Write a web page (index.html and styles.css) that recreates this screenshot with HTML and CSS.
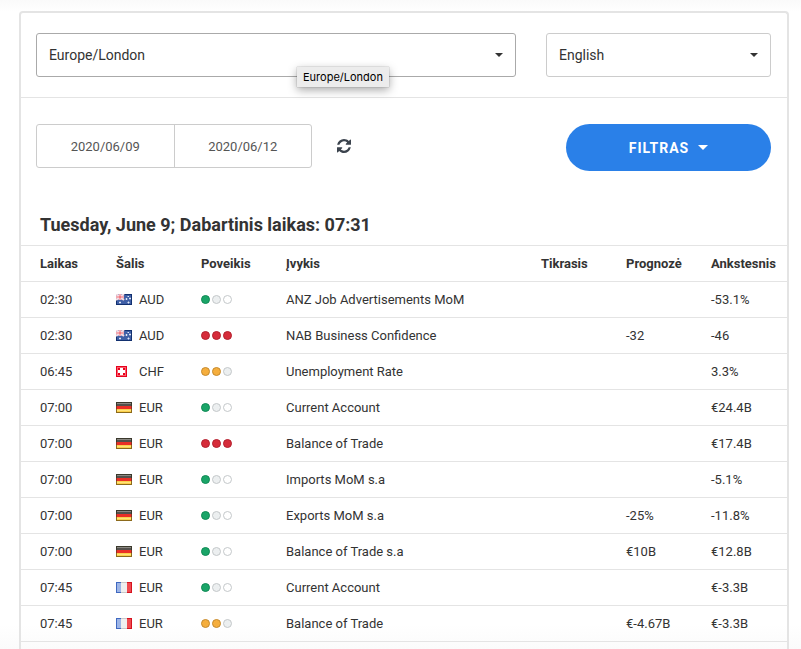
FILE: index.html
```html
<!DOCTYPE html>
<html lang="lt">
<head>
  <meta charset="utf-8">
  <meta name="viewport" content="width=device-width, initial-scale=1">
  <title>Ekonominis kalendorius</title>
  <link rel="stylesheet" href="styles.css">
</head>
<body>
  <svg class="sprite" aria-hidden="true">
    <symbol id="flag-au" viewBox="0 0 16 11">
      <rect width="16" height="11" fill="#12306f"/>
      <rect x="1" y="1" width="14" height="9" fill="#3f5fa6"/>
      <rect width="8" height="6" fill="#8f9ccb"/>
      <path d="M0 0l8 6M8 0L0 6" stroke="#f6dbe0" stroke-width="2"/>
      <path d="M4 0v6M0 3h8" stroke="#fff" stroke-width="2"/>
      <path d="M4 0v6M0 3h8" stroke="#e8505f" stroke-width="1"/>
      <path d="M3 8.500h2M4 7.500v2M9.500 5h2M10.500 4v2M13 4.500h2M14 3.500v2M11.500 2.500h1.500M11.500 8.500h2M12.500 7.500v2" stroke="#dfe6f6" stroke-width="1"/>
    </symbol>
    <symbol id="flag-ch" viewBox="0 0 11 11">
      <rect width="11" height="11" fill="#e8001c"/>
      <rect x="1.500" y="1.500" width="8" height="8" fill="none" stroke="#f9626f"/>
      <path d="M4 2h3v2h2v3H7v2H4V7H2V4h2z" fill="#fff"/>
    </symbol>
    <symbol id="flag-de" viewBox="0 0 16 11">
      <rect width="16" height="4" fill="#3a382c"/>
      <rect y="4" width="16" height="3" fill="#8f3020"/>
      <rect y="7" width="16" height="4" fill="#8c6a1c"/>
      <rect x="1" y="1" width="14" height="1" fill="#8a8882"/>
      <rect x="1" y="2" width="14" height="2" fill="#54504c"/>
      <rect x="1" y="4" width="14" height="3" fill="#ea2f26"/>
      <rect x="1" y="7" width="14" height="3" fill="#fbd04a"/>
      <rect x="1" y="8" width="14" height="1" fill="#ffe27c"/>
    </symbol>
    <symbol id="flag-fr" viewBox="0 0 16 11">
      <rect width="6" height="11" fill="#3f68c0"/>
      <rect x="5" width="6" height="11" fill="#c9c9c9"/>
      <rect x="11" width="5" height="11" fill="#d5121f"/>
      <rect x="1" y="1" width="4" height="9" fill="#9db5e6"/>
      <rect x="5" y="1" width="6" height="9" fill="#efefef"/>
      <rect x="11" y="1" width="4" height="9" fill="#f04a50"/>
    </symbol>
  </svg>

  <main class="calendar">
    <div class="settings">
      <div class="select-box timezone">
        <select class="active" aria-label="Laiko juosta">
          <option>Europe/London</option>
        </select>
        <span class="tooltip">Europe/London</span>
      </div>
      <div class="select-box language">
        <select aria-label="Kalba">
          <option>English</option>
        </select>
      </div>
    </div>

    <div class="toolbar">
      <div class="dates">
        <input type="text" value="2020/06/09" aria-label="Nuo">
        <input type="text" value="2020/06/12" aria-label="Iki">
      </div>
      <button type="button" class="refresh" aria-label="Atnaujinti">
        <svg viewBox="0 0 1536 1536" width="14" height="14"><path d="M1511 928q0 5-1 7-64 268-268 434.500t-478 166.500q-146 0-282.500-55t-243.500-157l-129 129q-19 19-45 19t-45-19-19-45v-448q0-26 19-45t45-19h448q26 0 45 19t19 45-19 45l-137 137q71 66 161 102t187 36q134 0 250-65t186-179q11-17 53-117 8-23 30-23h192q13 0 22.500 9.500t9.500 22.500zm25-800v448q0 26-19 45t-45 19h-448q-26 0-45-19t-19-45 19-45l138-138q-148-137-349-137-134 0-250 65t-186 179q-11 17-53 117-8 23-30 23h-199q-13 0-22.500-9.500t-9.500-22.500v-7q65-268 270-434.500t480-166.500q146 0 284 55.500t245 156.500l130-129q19-19 45-19t45 19 19 45z"/></svg>
      </button>
      <button type="button" class="filter">Filtras</button>
    </div>

    <h2>Tuesday, June 9; Dabartinis laikas: 07:31</h2>

    <table>
      <thead>
        <tr>
          <th class="col-time">Laikas</th>
          <th class="col-data">Šalis</th>
          <th class="col-data">Poveikis</th>
          <th>Įvykis</th>
          <th class="col-data">Tikrasis</th>
          <th class="col-data">Prognozė</th>
          <th class="col-last">Ankstesnis</th>
        </tr>
      </thead>
      <tbody>
        <tr>
          <td>02:30</td>
          <td><span class="country"><svg class="flag"><use href="#flag-au"/></svg>AUD</span></td>
          <td><span class="impact low"><i></i><i></i><i></i></span></td>
          <td>ANZ Job Advertisements MoM</td>
          <td></td>
          <td></td>
          <td>-53.1%</td>
        </tr>
        <tr>
          <td>02:30</td>
          <td><span class="country"><svg class="flag"><use href="#flag-au"/></svg>AUD</span></td>
          <td><span class="impact high"><i></i><i></i><i></i></span></td>
          <td>NAB Business Confidence</td>
          <td></td>
          <td>-32</td>
          <td>-46</td>
        </tr>
        <tr>
          <td>06:45</td>
          <td><span class="country"><svg class="flag"><use href="#flag-ch" width="11"/></svg>CHF</span></td>
          <td><span class="impact medium"><i></i><i></i><i></i></span></td>
          <td>Unemployment Rate</td>
          <td></td>
          <td></td>
          <td>3.3%</td>
        </tr>
        <tr>
          <td>07:00</td>
          <td><span class="country"><svg class="flag"><use href="#flag-de"/></svg>EUR</span></td>
          <td><span class="impact low"><i></i><i></i><i></i></span></td>
          <td>Current Account</td>
          <td></td>
          <td></td>
          <td>€24.4B</td>
        </tr>
        <tr>
          <td>07:00</td>
          <td><span class="country"><svg class="flag"><use href="#flag-de"/></svg>EUR</span></td>
          <td><span class="impact high"><i></i><i></i><i></i></span></td>
          <td>Balance of Trade</td>
          <td></td>
          <td></td>
          <td>€17.4B</td>
        </tr>
        <tr>
          <td>07:00</td>
          <td><span class="country"><svg class="flag"><use href="#flag-de"/></svg>EUR</span></td>
          <td><span class="impact low"><i></i><i></i><i></i></span></td>
          <td>Imports MoM s.a</td>
          <td></td>
          <td></td>
          <td>-5.1%</td>
        </tr>
        <tr>
          <td>07:00</td>
          <td><span class="country"><svg class="flag"><use href="#flag-de"/></svg>EUR</span></td>
          <td><span class="impact low"><i></i><i></i><i></i></span></td>
          <td>Exports MoM s.a</td>
          <td></td>
          <td>-25%</td>
          <td>-11.8%</td>
        </tr>
        <tr>
          <td>07:00</td>
          <td><span class="country"><svg class="flag"><use href="#flag-de"/></svg>EUR</span></td>
          <td><span class="impact low"><i></i><i></i><i></i></span></td>
          <td>Balance of Trade s.a</td>
          <td></td>
          <td>€10B</td>
          <td>€12.8B</td>
        </tr>
        <tr>
          <td>07:45</td>
          <td><span class="country"><svg class="flag"><use href="#flag-fr"/></svg>EUR</span></td>
          <td><span class="impact low"><i></i><i></i><i></i></span></td>
          <td>Current Account</td>
          <td></td>
          <td></td>
          <td>€-3.3B</td>
        </tr>
        <tr>
          <td>07:45</td>
          <td><span class="country"><svg class="flag"><use href="#flag-fr"/></svg>EUR</span></td>
          <td><span class="impact medium"><i></i><i></i><i></i></span></td>
          <td>Balance of Trade</td>
          <td></td>
          <td>€-4.67B</td>
          <td>€-3.3B</td>
        </tr>
      </tbody>
    </table>
  </main>
</body>
</html>
```
FILE: styles.css
```css
* {
  box-sizing: border-box;
}
body {
  display: flex;
  flex-direction: column;
  min-height: 100vh;
  margin: 0;
  padding: 11px 12px 0 19px;
  background: linear-gradient(#fafafa, #fff 12px, #fff calc(100% - 24px), #fbfbfb);
  color: #333;
  font-family: Roboto, sans-serif;
  font-size: 13px;
}
.sprite {
  display: none;
}
.calendar {
  flex: 1;
  border: 2px solid #e4e4e4;
  border-bottom: none;
  border-radius: 4px 4px 0 0;
}

/* timezone and language */
.settings {
  display: flex;
  gap: 30px;
  padding: 20px 16px 20px 15px;
  border-bottom: 1px solid #e4e4e4;
}
.select-box {
  position: relative;
}
.timezone {
  flex: 32;
}
.language {
  flex: 15;
}
select {
  appearance: none;
  display: block;
  width: 100%;
  height: 44px;
  padding: 0 12px;
  border: 1px solid #ccc;
  border-radius: 3px;
  background: #fff;
  color: #333;
  font-family: inherit;
  font-size: 14px;
}
select.active {
  border-color: #aaa;
}
.select-box::after {
  content: "";
  position: absolute;
  top: 20px;
  right: 13px;
  border: 4px solid transparent;
  border-top-color: #333;
  border-bottom: none;
}
.tooltip {
  position: absolute;
  z-index: 1;
  top: 34px;
  left: 261px;
  padding: 0 6px;
  background: #ececec;
  box-shadow: 0 0 1px rgba(0,0,0,0.4), 0 3px 10px rgba(0,0,0,0.35);
  color: #000;
  font-family: Inter, sans-serif;
  font-size: 11px;
  line-height: 20px;
}

/* dates, refresh, filter */
.toolbar {
  display: flex;
  align-items: flex-start;
  padding: 26px 16px 0 15px;
}
.dates {
  display: flex;
  width: 276px;
  border: 1px solid #ccc;
  border-radius: 3px;
}
.dates input {
  flex: 1;
  min-width: 0;
  height: 42px;
  padding: 0;
  border: none;
  background: none;
  color: #555;
  font-family: inherit;
  font-size: 13px;
  text-align: center;
}
.dates input + input {
  border-left: 1px solid #ccc;
}
button {
  border: none;
  cursor: pointer;
}
.refresh {
  display: flex;
  align-items: center;
  height: 44px;
  margin-left: 25px;
  padding: 0;
  background: none;
  fill: #3b434d;
}
.filter {
  display: flex;
  align-items: center;
  justify-content: center;
  gap: 9px;
  width: 205px;
  height: 47px;
  margin-left: auto;
  border-radius: 24px;
  background: #2a80e8;
  color: #fff;
  font-family: inherit;
  font-size: 14px;
  font-weight: bold;
  letter-spacing: 1px;
  text-transform: uppercase;
}
.filter::after {
  content: "";
  border: 5px solid transparent;
  border-top-color: #fff;
  border-bottom: none;
}

h2 {
  margin: 0;
  padding: 42px 19px 8px;
  font-size: 18px;
  line-height: 24px;
}

/* events */
table {
  width: 100%;
  table-layout: fixed;
  border-collapse: collapse;
}
tr {
  height: 36px;
  border-top: 1px solid #e4e4e4;
}
tbody tr:last-child {
  border-bottom: 1px solid #e4e4e4;
}
th, td {
  padding: 0;
  text-align: left;
  white-space: nowrap;
}
th:first-child, td:first-child {
  padding-left: 19px;
}
.col-time {
  width: 95px;
}
.col-data {
  width: 85px;
}
.col-last {
  width: 76px;
}
.country {
  display: flex;
  align-items: center;
  gap: 7px;
}
.flag {
  width: 16px;
  height: 11px;
}
.impact {
  display: flex;
  gap: 2px;
}
.impact i {
  width: 9px;
  height: 9px;
  border: 1px solid #c4c8ca;
  border-radius: 50%;
  background: #eceff0;
}
.low i:first-child {
  border-color: #0f8a55;
  background: #1aa568;
}
.low i:last-child {
  background: #fff;
}
.medium i {
  border-color: #c58a2e;
  background: #f5ae3d;
}
.medium i:last-child {
  border-color: #c4c8ca;
  background: #eceff0;
}
.high i {
  border-color: #b3202e;
  background: #d62c3a;
}
```
